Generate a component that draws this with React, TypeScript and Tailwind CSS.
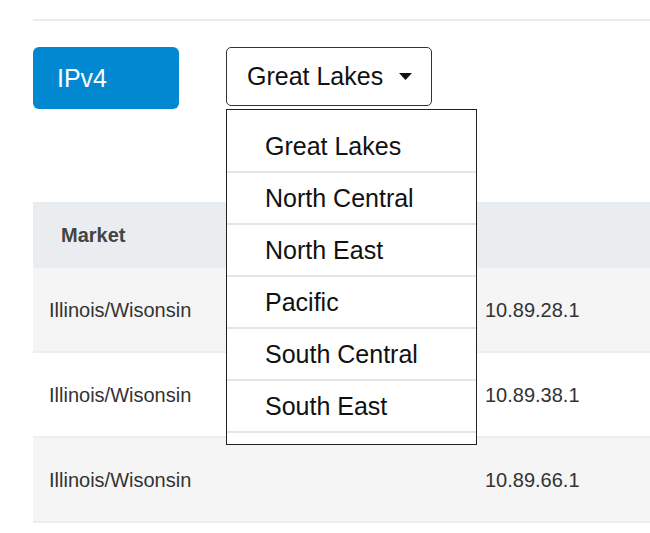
import React from "react";

const regions = ["Great Lakes", "North Central", "North East", "Pacific", "South Central", "South East"];
const rows = [
  { market: "Illinois/Wisonsin", ip: "10.89.28.1", bg: "bg-[#f5f5f5]" },
  { market: "Illinois/Wisonsin", ip: "10.89.38.1", bg: "bg-white" },
  { market: "Illinois/Wisonsin", ip: "10.89.66.1", bg: "bg-[#f5f5f5]" },
];

export default function App() {
  return (
    <div
      className="w-[650px] h-[533px] overflow-hidden bg-white"
      style={{ fontFamily: '"Liberation Sans", Arial, sans-serif' }}
    >
      <div className="pl-[33px] pt-[19px]">
        <div className="h-[2px] bg-[#ececec]" />
        <div className="flex items-start mt-[26px] gap-[47px]">
          <button className="w-[146px] h-[62px] rounded-[6px] bg-[#0288d1] text-white text-[25px] text-left pl-[24px] leading-none">
            IPv4
          </button>
          <div className="relative z-10">
            <button className="w-[206px] h-[59px] rounded-[5px] border-[1.5px] border-[#333] bg-white flex items-center pl-[20px] text-[25px] text-[#111] leading-none">
              <span>Great Lakes</span>
              <svg width="13" height="7" viewBox="0 0 13 7" className="ml-[16px]">
                <path d="M0 0 H13 L6.5 7 Z" fill="#111" />
              </svg>
            </button>
            <div className="absolute left-0 top-[62px] w-[251px] h-[336px] border-[1.5px] border-[#222] bg-white pt-[11px]">
              {regions.map((r) => (
                <div
                  key={r}
                  className="h-[52px] border-b-[2px] border-[#e3e5e8] flex items-center pl-[38px] text-[25px] text-[#111] leading-none"
                >
                  {r}
                </div>
              ))}
            </div>
          </div>
        </div>
        <div className="mt-[93px] w-[640px]">
          <div className="h-[66px] bg-[#eaedf0] flex items-center pl-[28px] text-[20px] font-bold text-[#444]">
            Market
          </div>
          {rows.map((row, i) => (
            <div
              key={i}
              className={`h-[85px] ${row.bg} border-b-[2px] border-[#eceff2] flex items-center text-[20px] text-[#333]`}
            >
              <div className="w-[436px] pl-[16px]">{row.market}</div>
              <div className="pl-[16px]">{row.ip}</div>
            </div>
          ))}
        </div>
      </div>
    </div>
  );
}
